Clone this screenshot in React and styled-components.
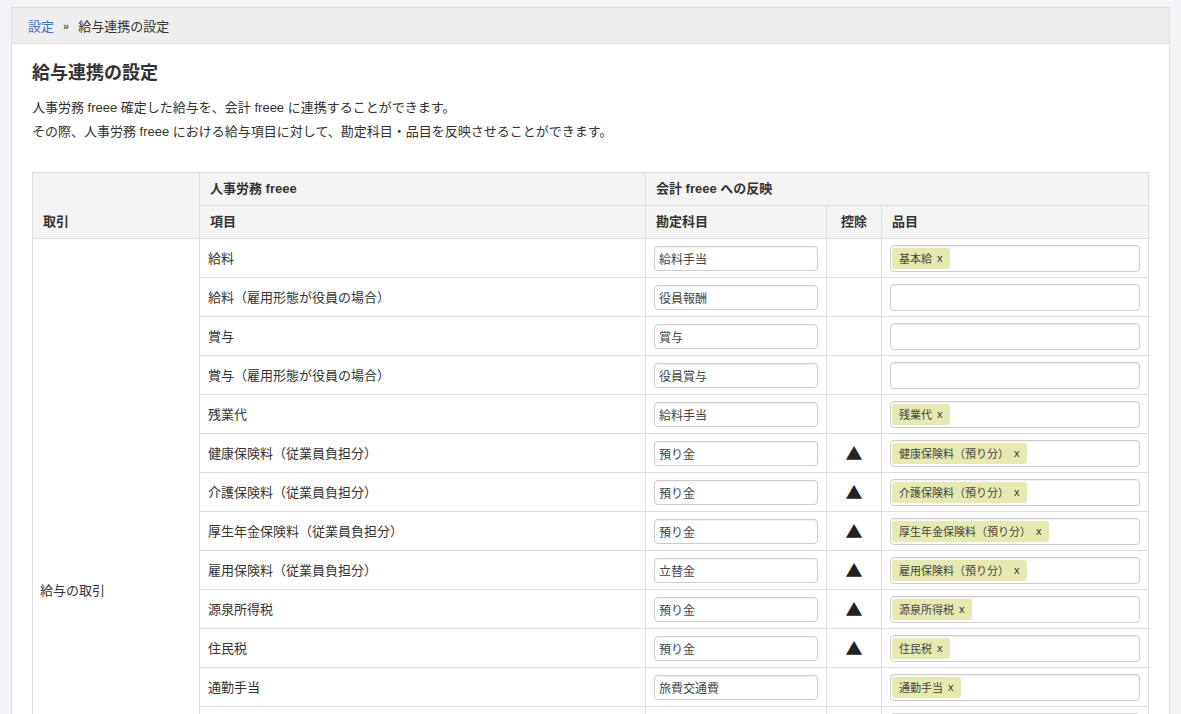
import React from "react";
import styled, { createGlobalStyle } from "styled-components";

const GlobalStyle = createGlobalStyle`
  html, body {
    margin: 0;
    padding: 0;
    background: #f4f5f9;
  }
  body {
    font-family: "Helvetica Neue", "Liberation Sans", "Noto Sans CJK JP", sans-serif;
    color: #333;
    font-size: 13px;
  }
`;

const Page = styled.div`
  padding: 7px 11px 0 11px;
`;

const Panel = styled.div`
  background: #fff;
  border: 1px solid #ddd;
  border-bottom: none;
`;

const Breadcrumb = styled.div`
  height: 35px;
  display: flex;
  align-items: center;
  gap: 9px;
  padding: 0 16px;
  background: #eeeeee;
  border-bottom: 1px solid #dcdcdc;
  font-size: 13px;
`;

const Crumb = styled.a`
  color: #3d72b8;
  text-decoration: none;
`;

const Sep = styled.span`
  font-size: 11px;
  color: #555;
  font-weight: bold;
`;

const Body = styled.div`
  padding: 16px 20px 0 20px;
`;

const Title = styled.h1`
  margin: 0;
  font-size: 18px;
  font-weight: bold;
  line-height: 26px;
  color: #333;
`;

const Lead = styled.p`
  margin: 10px 0 0;
  font-size: 13px;
  line-height: 24px;
`;

const Table = styled.table`
  margin-top: 28px;
  width: 100%;
  border-collapse: collapse;
  font-size: 13px;
`;

const Th = styled.th`
  background: #f4f4f4;
  border: 1px solid #ddd;
  text-align: ${(p) => p.$align || "left"};
  vertical-align: bottom;
  font-weight: bold;
  padding: 0 10px 8px;
  height: 24px;
  width: ${(p) => p.$w || "auto"};
`;

const Td = styled.td`
  border: 1px solid #ddd;
  padding: 0 8px;
  height: 38px;
  vertical-align: ${(p) => (p.$top ? "top" : "middle")};
  text-align: ${(p) => p.$align || "left"};
`;

const RowLabel = styled.div`
  padding-top: 11px;
  line-height: 18px;
`;

const TextInput = styled.div`
  box-sizing: border-box;
  height: 25px;
  border: 1px solid #ccc;
  border-radius: 4px;
  box-shadow: inset 0 1px 1px rgba(0, 0, 0, 0.06);
  padding: 0 4px;
  display: flex;
  align-items: center;
  font-size: 12px;
  color: #444;
`;

const TagInput = styled.div`
  box-sizing: border-box;
  height: 27px;
  border: 1px solid #ccc;
  border-radius: 4px;
  box-shadow: inset 0 1px 1px rgba(0, 0, 0, 0.06);
  padding: 2px 1px;
  display: flex;
  align-items: stretch;
`;

const Tag = styled.span`
  background: #e6e9b2;
  border-radius: 3px;
  padding: 0 7px;
  font-size: 11px;
  color: #444;
  display: flex;
  align-items: center;
  gap: 5px;
`;

const Close = styled.span`
  font-size: 11px;
  color: #333;
`;

const Triangle = styled.span`
  font-family: "Noto Sans CJK JP", sans-serif;
  font-size: 17px;
  line-height: 1;
  color: #222;
`;

const rows = [
  { item: "給料", account: "給料手当", tags: ["基本給"] },
  { item: "給料（雇用形態が役員の場合）", account: "役員報酬", tags: [] },
  { item: "賞与", account: "賞与", tags: [] },
  { item: "賞与（雇用形態が役員の場合）", account: "役員賞与", tags: [] },
  { item: "残業代", account: "給料手当", tags: ["残業代"] },
  { item: "健康保険料（従業員負担分）", account: "預り金", minus: true, tags: ["健康保険料（預り分）"] },
  { item: "介護保険料（従業員負担分）", account: "預り金", minus: true, tags: ["介護保険料（預り分）"] },
  { item: "厚生年金保険料（従業員負担分）", account: "預り金", minus: true, tags: ["厚生年金保険料（預り分）"] },
  { item: "雇用保険料（従業員負担分）", account: "立替金", minus: true, tags: ["雇用保険料（預り分）"] },
  { item: "源泉所得税", account: "預り金", minus: true, tags: ["源泉所得税"] },
  { item: "住民税", account: "預り金", minus: true, tags: ["住民税"] },
  { item: "通勤手当", account: "旅費交通費", tags: ["通勤手当"] },
  { item: "課税手当", account: "給料手当", tags: ["課税手当"] },
  { item: "非課税手当", account: "給料手当", tags: ["非課税手当"] },
  { item: "その他控除", account: "預り金", minus: true, tags: [] },
  { item: "年末調整（還付）", account: "預り金", tags: [] },
  { item: "年末調整（徴収）", account: "預り金", minus: true, tags: [] },
  { item: "差引支給額", account: "未払金", tags: [] },
];

function TagField({ tags }) {
  return (
    <TagInput>
      {tags.map((t) => (
        <Tag key={t}>
          {t}
          <Close>x</Close>
        </Tag>
      ))}
    </TagInput>
  );
}

export default function App() {
  return (
    <>
      <GlobalStyle />
      <Page>
        <Panel>
          <Breadcrumb>
            <Crumb href="#">設定</Crumb>
            <Sep>»</Sep>
            <span>給与連携の設定</span>
          </Breadcrumb>
          <Body>
            <Title>給与連携の設定</Title>
            <Lead>
              人事労務 freee 確定した給与を、会計 freee に連携することができます。
              <br />
              その際、人事労務 freee における給与項目に対して、勘定科目・品目を反映させることができます。
            </Lead>
            <Table>
              <thead>
                <tr>
                  <Th rowSpan={2} $w="146px">取引</Th>
                  <Th>人事労務 freee</Th>
                  <Th colSpan={3}>会計 freee への反映</Th>
                </tr>
                <tr>
                  <Th $w="425px">項目</Th>
                  <Th $w="160px">勘定科目</Th>
                  <Th $w="34px" $align="center">控除</Th>
                  <Th>品目</Th>
                </tr>
              </thead>
              <tbody>
                {rows.map((r, i) => (
                  <tr key={r.item}>
                    {i === 0 && (
                      <Td rowSpan={rows.length} style={{ paddingLeft: 7 }}>給与の取引</Td>
                    )}
                    <Td $top>
                      <RowLabel>{r.item}</RowLabel>
                    </Td>
                    <Td>
                      <TextInput>{r.account}</TextInput>
                    </Td>
                    <Td $align="center">{r.minus && <Triangle>▲</Triangle>}</Td>
                    <Td>
                      <TagField tags={r.tags} />
                    </Td>
                  </tr>
                ))}
              </tbody>
            </Table>
          </Body>
        </Panel>
      </Page>
    </>
  );
}
